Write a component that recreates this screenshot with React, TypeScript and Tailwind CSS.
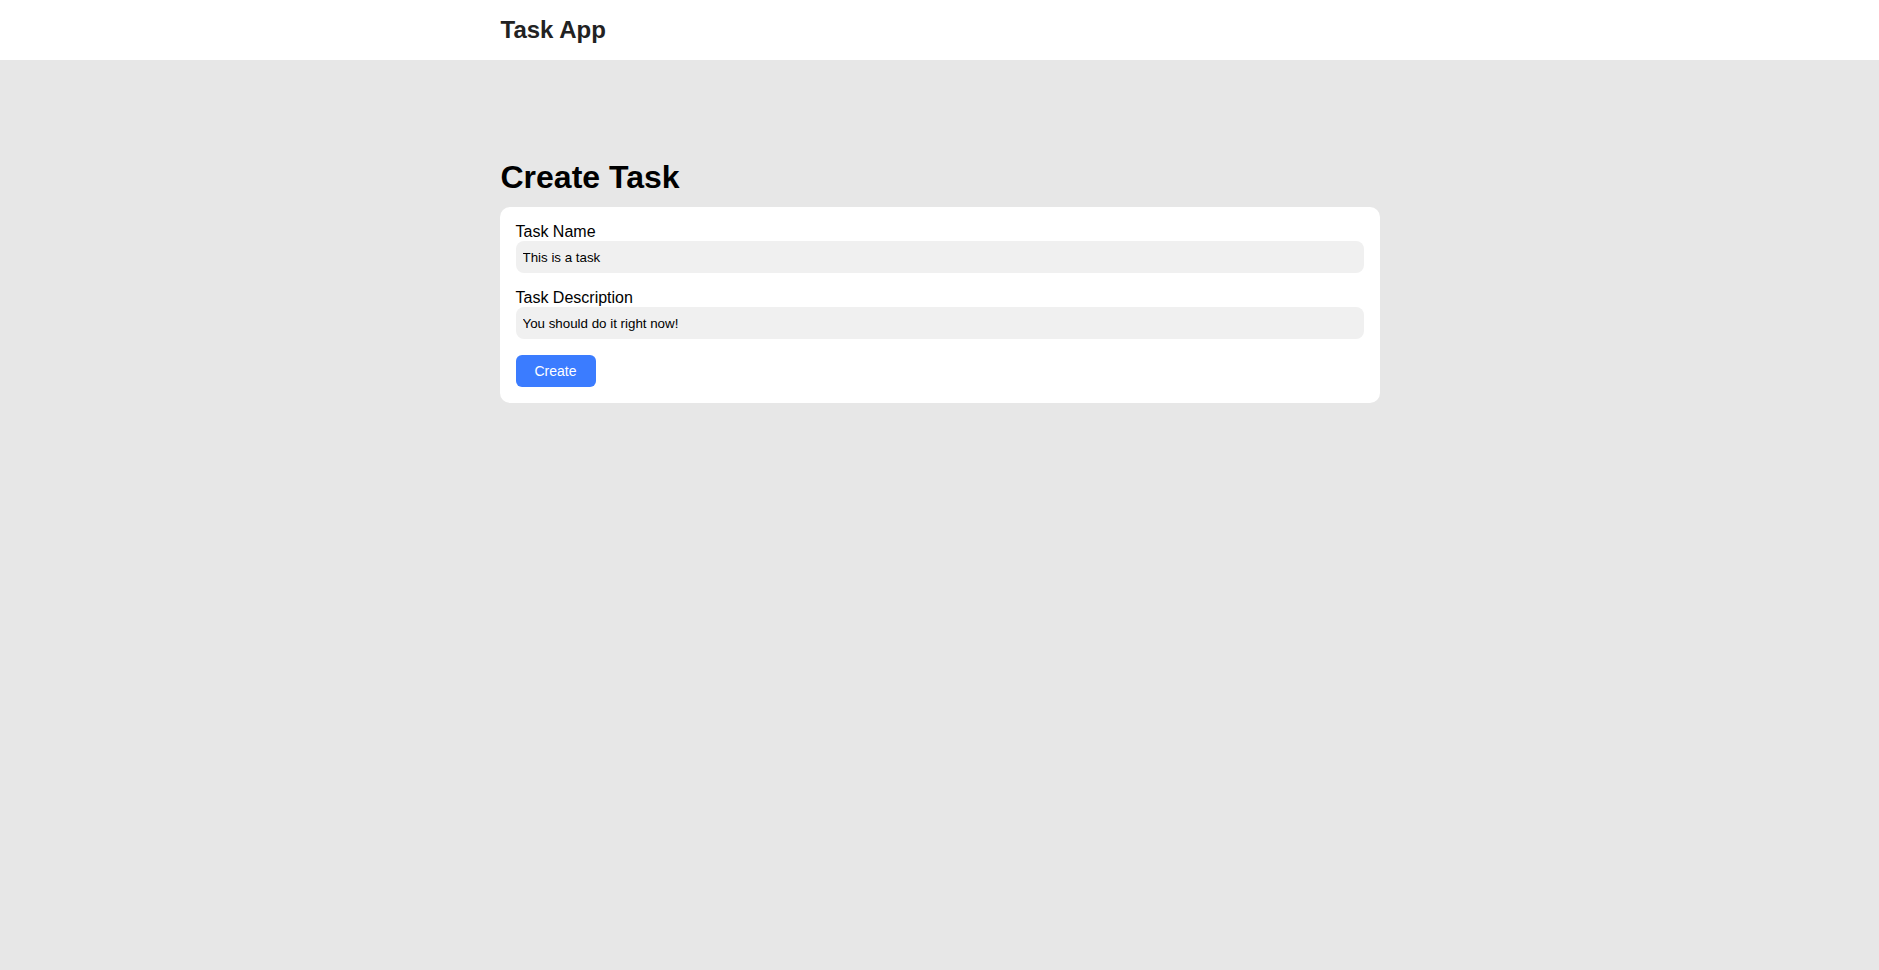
export default function App() {
  return (
    <div className="min-h-screen bg-[#e7e7e7] font-['Liberation_Sans',Arial,sans-serif]">
      {/* Top bar */}
      <div className="bg-white h-[60px]">
        <div className="max-w-[880px] mx-auto h-full flex items-center pl-px">
          <h2 className="text-[24px] font-bold text-[#222222]">Task App</h2>
        </div>
      </div>

      <div className="max-w-[880px] mx-auto pt-[99px]">
        <h1 className="text-[32px] font-bold text-black leading-[37px] mb-[11px] pl-px">Create Task</h1>
        <form
          className="bg-white rounded-[10px] p-4"
          onSubmit={(e) => e.preventDefault()}
        >
          <div className="mb-4">
            <label className="block text-base leading-[18px] text-black">Task Name</label>
            <input
              className="block w-full h-8 rounded-lg bg-[#f0f0f0] pl-[7px] pr-1.5 text-[13.33px] text-black outline-none"
              defaultValue="This is a task"
            />
          </div>
          <div className="mb-4">
            <label className="block text-base leading-[18px] text-black">Task Description</label>
            <input
              className="block w-full h-8 rounded-lg bg-[#f0f0f0] pl-[7px] pr-1.5 text-[13.33px] text-black outline-none"
              defaultValue="You should do it right now!"
            />
          </div>
          <button
            type="submit"
            className="w-20 h-8 rounded-md bg-[#3b7cff] text-white text-sm"
          >
            Create
          </button>
        </form>
      </div>
    </div>
  );
}
